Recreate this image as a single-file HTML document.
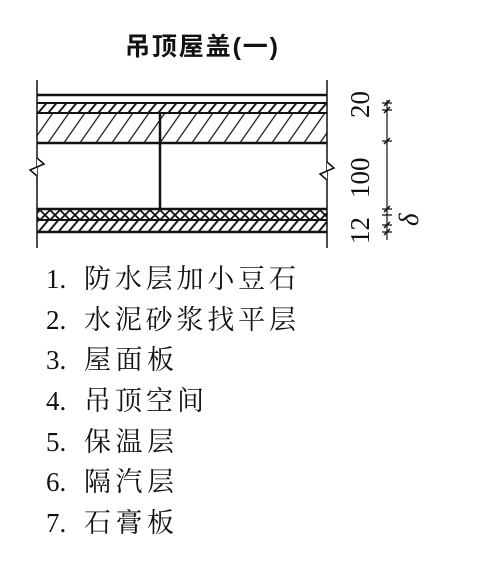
<!DOCTYPE html>
<html><head><meta charset="utf-8"><style>
html,body{margin:0;padding:0;background:#fff;width:486px;height:566px;overflow:hidden}
svg{display:block}
.t{font-family:"Liberation Serif","Noto Serif CJK SC",serif;font-size:27px;fill:#111}
.h{font-family:"Liberation Sans","Noto Sans CJK SC",sans-serif;font-size:25px;fill:#111;font-weight:bold}
</style></head><body>
<svg width="486" height="566" viewBox="0 0 486 566">
<defs>
<pattern id="hat" width="10" height="10" patternUnits="userSpaceOnUse" patternTransform="skewX(-40)">
<line x1="3" y1="0" x2="3" y2="10" stroke="#111" stroke-width="2.5"/>
</pattern>
<pattern id="hat2" width="16" height="30" patternUnits="userSpaceOnUse" patternTransform="skewX(-35)">
<line x1="4" y1="0" x2="4" y2="30" stroke="#111" stroke-width="1.5"/>
</pattern>
<pattern id="cross" width="10" height="10" patternUnits="userSpaceOnUse">
<path d="M0 0L10 10M10 0L0 10" stroke="#111" stroke-width="1.8"/>
</pattern>
</defs>
<text class="h" x="125" y="55" textLength="153">吊顶屋盖(一)</text>
<g stroke="#111" fill="none">
<line x1="37" y1="80" x2="37" y2="248" stroke-width="1.5"/>
<line x1="327" y1="80" x2="327" y2="248" stroke-width="1.5"/>
<line x1="37" y1="95" x2="327" y2="95" stroke-width="2.5"/>
<line x1="37" y1="103" x2="327" y2="103" stroke-width="2"/>
<rect x="37" y="104" width="290" height="8" fill="url(#hat)" stroke="none"/>
<line x1="37" y1="113" x2="327" y2="113" stroke-width="2"/>
<rect x="37" y="113" width="290" height="30" fill="url(#hat2)" stroke="none"/>
<line x1="37" y1="143" x2="327" y2="143" stroke-width="2.5"/>
<line x1="160" y1="113" x2="160" y2="209" stroke-width="2.5"/>
<line x1="37" y1="209" x2="327" y2="209" stroke-width="2.5"/>
<rect x="37" y="210" width="290" height="10" fill="url(#cross)" stroke="none"/>
<line x1="37" y1="220" x2="327" y2="220" stroke-width="2"/>
<rect x="37" y="221" width="290" height="10" fill="url(#hat)" stroke="none"/>
<line x1="37" y1="232" x2="327" y2="232" stroke-width="2.5"/>
<path d="M37 158L44 164L30 170L37 176" stroke-width="1.5" fill="#fff"/>
<path d="M327 162L334 168L320 174L327 180" stroke-width="1.5" fill="#fff"/>
<line x1="387" y1="100" x2="387" y2="240" stroke-width="1.2"/>
<path d="M382 103L392 103M382 110L392 110M382 141L392 141M382 209L392 209M382 215L392 215M382 225L392 225M382 232L392 232" stroke-width="1.2"/>
<path d="M384 106L390 100M384 113L390 107M384 144L390 138M384 212L390 206M384 228L390 222M384 235L390 229" stroke-width="1.5"/>
</g>
<text class="t" transform="translate(369,118) rotate(-90)" font-size="24">20</text>
<text class="t" transform="translate(369,198) rotate(-90)" font-size="24">100</text>
<text class="t" transform="translate(369,244) rotate(-90)" font-size="24">12</text>
<text class="t" transform="translate(418,226) rotate(-90)" font-size="24" font-style="italic">δ</text>
<g class="t">
<text x="46" y="288">1. <tspan x="84" textLength="212">防水层加小豆石</tspan></text>
<text x="46" y="329">2. <tspan x="84" textLength="212">水泥砂浆找平层</tspan></text>
<text x="46" y="369">3. <tspan x="84" textLength="90">屋面板</tspan></text>
<text x="46" y="410">4. <tspan x="84" textLength="120">吊顶空间</tspan></text>
<text x="46" y="451">5. <tspan x="84" textLength="90">保温层</tspan></text>
<text x="46" y="491">6. <tspan x="84" textLength="90">隔汽层</tspan></text>
<text x="46" y="532">7. <tspan x="84" textLength="90">石膏板</tspan></text>
</g>
</svg>
</body></html>
